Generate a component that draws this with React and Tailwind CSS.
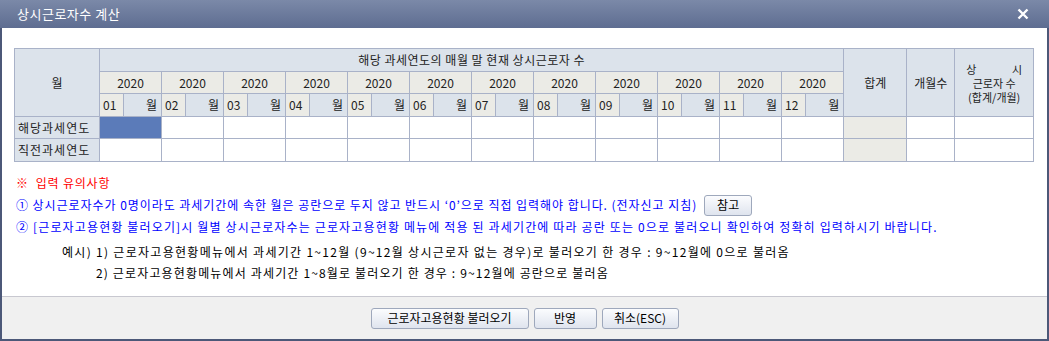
import React from 'react';

const months = ['01', '02', '03', '04', '05', '06', '07', '08', '09', '10', '11', '12'];

const cell = 'border border-[#a9b2c8] p-0';

function Btn({ children, className = '' }) {
  return (
    <button
      className={`h-[21px] rounded-[3px] border border-[#9ea8bc] bg-gradient-to-b from-[#fbfcfe] to-[#dfe4ee] text-[12px] text-black leading-none ${className}`}
    >
      {children}
    </button>
  );
}

export default function App() {
  return (
    <div
      className="w-[1049px] h-[341px] bg-[#4c5878] px-[2px] pb-[2px] flex flex-col overflow-hidden"
      style={{ fontFamily: '"Noto Sans CJK KR", "Liberation Sans", sans-serif' }}
    >
      <div className="h-[28px] -mx-[2px] px-[17px] flex items-center justify-between bg-gradient-to-b from-[#7b89a8] to-[#5e6d91]">
        <span className="text-white text-[13px] tracking-[0.5px]">상시근로자수 계산</span>
        <svg width="12" height="12" viewBox="0 0 12 12" className="mr-[3px]">
          <path d="M1.5 1.5 L10.5 10.5 M10.5 1.5 L1.5 10.5" stroke="#fff" strokeWidth="2.4" />
        </svg>
      </div>

      <div className="flex-1 bg-white pt-[20px] pl-[12px] text-[12px] leading-none">
        <table className="border-collapse table-fixed w-[1019px] text-[12px] text-[#222]">
          <colgroup>
            <col className="w-[85px]" />
            {months.map(m => (
              <React.Fragment key={m}>
                <col className="w-[24px]" />
                <col className="w-[38px]" />
              </React.Fragment>
            ))}
            <col className="w-[63px]" />
            <col className="w-[48px]" />
            <col className="w-[79px]" />
          </colgroup>
          <tbody>
            <tr className="h-[23px]">
              <td rowSpan={3} className={`${cell} bg-[#dce3eb] text-center`}>월</td>
              <td colSpan={24} className={`${cell} bg-[#dce3eb] text-center tracking-[0.5px]`}>
                해당 과세연도의 매월 말 현재 상시근로자 수
              </td>
              <td rowSpan={3} className={`${cell} bg-[#dce3eb] text-center`}>합계</td>
              <td rowSpan={3} className={`${cell} bg-[#dce3eb] text-center`}>개월수</td>
              <td rowSpan={3} className={`${cell} bg-[#dce3eb] text-center text-[11px] leading-[14px]`}>
                <div className="flex justify-between px-[11px]"><span>상</span><span>시</span></div>
                <div>근로자 수</div>
                <div>(합계/개월)</div>
              </td>
            </tr>
            <tr className="h-[22px]">
              {months.map(m => (
                <td key={m} colSpan={2} className={`${cell} bg-[#ebebe6] text-center`}>2020</td>
              ))}
            </tr>
            <tr className="h-[23px]">
              {months.map(m => (
                <React.Fragment key={m}>
                  <td className={`${cell} bg-[#ebebe6] pl-[3px]`}>{m}</td>
                  <td className={`${cell} bg-[#dce3eb] text-right pr-[4px]`}>월</td>
                </React.Fragment>
              ))}
            </tr>
            {['해당과세연도', '직전과세연도'].map((label, r) => (
              <tr key={label} className={r === 0 ? 'h-[22px]' : 'h-[23px]'}>
                <td className={`${cell} bg-[#dce3eb] pl-[3px] tracking-[1px]`}>{label}</td>
                {months.map((m, i) => (
                  <td key={m} colSpan={2} className={`${cell} ${r === 0 && i === 0 ? 'bg-[#5b7bb9]' : 'bg-white'}`} />
                ))}
                <td className={`${cell} bg-[#ebebe6]`} />
                <td className={`${cell} bg-white`} />
                <td className={`${cell} bg-white`} />
              </tr>
            ))}
          </tbody>
        </table>

        <div className="mt-[15px] pl-[2px] flex flex-col">
          <div className="text-[#ff0000] h-[12px] tracking-[0.8px]">※&nbsp; 입력 유의사항</div>
          <div className="mt-[10px] flex items-center text-[#0000ff] h-[12px] tracking-[0.95px]">
            <span>① 상시근로자수가 0명이라도 과세기간에 속한 월은 공란으로 두지 않고 반드시 ‘0’으로 직접 입력해야 합니다. (전자신고 지침)</span>
            <Btn className="ml-[7px] w-[48px] tracking-normal">참고</Btn>
          </div>
          <div className="mt-[10px] text-[#0000ff] h-[12px] tracking-[1.15px] whitespace-nowrap">
            ② [근로자고용현황 불러오기]시 월별 상시근로자수는 근로자고용현황 메뉴에 적용 된 과세기간에 따라 공란 또는 0으로 불러오니 확인하여 정확히 입력하시기 바랍니다.
          </div>
          <div className="mt-[13px] pl-[46px] text-black h-[12px] tracking-[1.3px] whitespace-nowrap">
            예시) 1) 근로자고용현황메뉴에서 과세기간 1~12월 (9~12월 상시근로자 없는 경우)로 불러오기 한 경우 : 9~12월에 0으로 불러옴
          </div>
          <div className="mt-[9px] pl-[80px] text-black h-[12px] tracking-[1.15px] whitespace-nowrap">
            2) 근로자고용현황메뉴에서 과세기간 1~8월로 불러오기 한 경우 : 9~12월에 공란으로 불러옴
          </div>
        </div>
      </div>

      <div className="h-[43px] border-t border-[#c8c8d0] bg-[#f0f0f0] flex items-center justify-center gap-[5px]">
        <Btn className="w-[158px]">근로자고용현황 불러오기</Btn>
        <Btn className="w-[63px]">반영</Btn>
        <Btn className="w-[77px]">취소(ESC)</Btn>
      </div>
    </div>
  );
}
